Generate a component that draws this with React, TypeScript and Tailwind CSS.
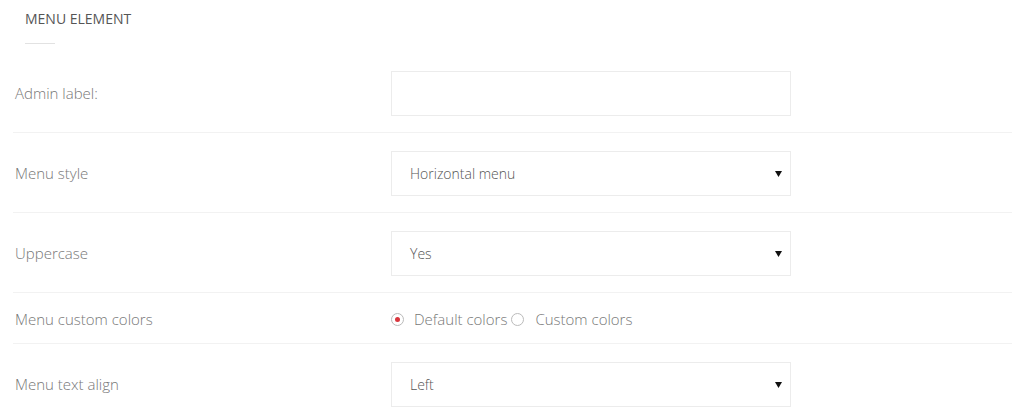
import React from "react";

const Arrow = () => (
  <svg width="7" height="6" viewBox="0 0 7 6" className="absolute right-[8px] top-[19px]">
    <path d="M0 0 H7 L3.5 6 Z" fill="#111" />
  </svg>
);

const Select = ({ value }: { value: string }) => (
  <div className="relative w-[400px] h-[45px] border border-[#ececec] bg-white flex items-center pl-[18px] text-[14px] font-light text-[#555]">
    {value}
    <Arrow />
  </div>
);

const Row = ({ label, children, radio }: { label: string; children: React.ReactNode; radio?: boolean }) => (
  <div className={`flex items-center border-b border-[#f2f2f2] ${radio ? "h-[51px] pt-[2px]" : "pt-[18px] pb-[16px]"}`}>
    <div className="w-[378px] pl-[2px] text-[15px] font-light text-[#777]">{label}</div>
    {children}
  </div>
);

export default function App() {
  return (
    <div className="w-[1012px] h-[419px] bg-white overflow-hidden" style={{ fontFamily: '"Open Sans", sans-serif' }}>
      <div className="h-[53px] pl-[25px] pt-[10px]">
        <div className="text-[14px] text-[#555] leading-[18px]">MENU ELEMENT</div>
        <div className="mt-[15px] w-[30px] h-px bg-[#e2e2e2]" />
      </div>
      <div className="ml-[13px]">
        <Row label="Admin label:">
          <div className="w-[400px] h-[45px] border border-[#ececec] bg-white" />
        </Row>
        <Row label="Menu style">
          <Select value="Horizontal menu" />
        </Row>
        <Row label="Uppercase">
          <Select value="Yes" />
        </Row>
        <Row label="Menu custom colors" radio>
          <div className="flex items-center text-[15px] font-light text-[#777]">
            <span className="w-[13px] h-[13px] rounded-full border border-[#bbb] flex items-center justify-center">
              <span className="w-[5px] h-[5px] rounded-full bg-[#d9363e]" />
            </span>
            <span className="ml-[10px]">Default colors</span>
            <span className="ml-[4px] w-[13px] h-[13px] rounded-full border border-[#bbb]" />
            <span className="ml-[11px]">Custom colors</span>
          </div>
        </Row>
        <Row label="Menu text align">
          <Select value="Left" />
        </Row>
      </div>
    </div>
  );
}
